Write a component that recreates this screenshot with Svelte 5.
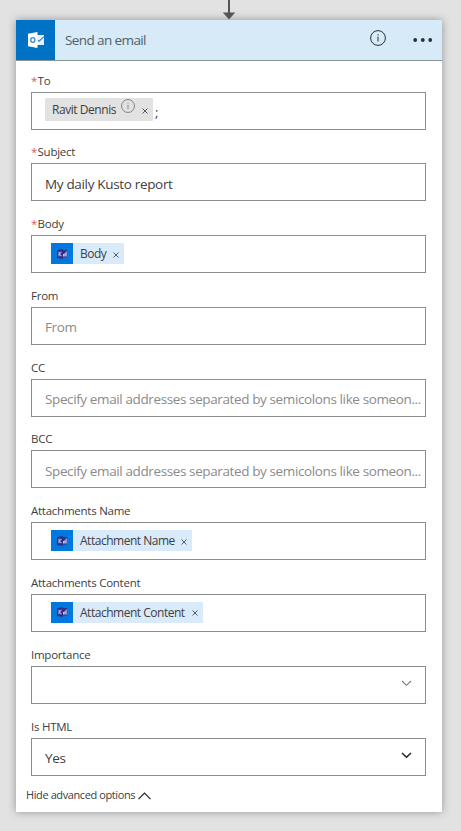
<script>
  const hint = 'Specify email addresses separated by semicolons like someon...';
  const fields = [
    { label: 'To', required: true, kind: 'person', value: 'Ravit Dennis' },
    { label: 'Subject', required: true, kind: 'text', value: 'My daily Kusto report' },
    { label: 'Body', required: true, kind: 'tokens', value: 'Body', width: 73 },
    { label: 'From', kind: 'placeholder', value: 'From' },
    { label: 'CC', kind: 'placeholder', value: hint },
    { label: 'BCC', kind: 'placeholder', value: hint },
    { label: 'Attachments Name', kind: 'tokens', value: 'Attachment Name', width: 141 },
    { label: 'Attachments Content', kind: 'tokens', value: 'Attachment Content', width: 152 },
    { label: 'Importance', kind: 'select', value: '' },
    { label: 'Is HTML', kind: 'select', value: 'Yes' }
  ];
</script>

{#snippet info(size)}
  <svg class="info" width={size} height={size} viewBox="0 0 16 16" fill="none" stroke="currentColor">
    <circle cx="8" cy="8" r="7.4" />
    <path d="M8 6.7v4.8M8 4.3v1.2" />
  </svg>
{/snippet}

{#snippet cross()}
  <svg class="cross" width="6" height="6" viewBox="0 0 6 6" stroke="#555c61" stroke-width="1"><path d="M.5.5l5 5M5.5.5l-5 5" /></svg>
{/snippet}

<main>
  <svg class="arrow" width="14" height="20" viewBox="0 0 14 20" fill="#555"><path d="M6 0h2v12.5h5.2L7 19.5.8 12.5H6z" /></svg>
  <section class="card">
    <header>
      <div class="logo">
        <svg width="18" height="18" viewBox="0 0 18 18">
          <path fill="#e4f2fc" d="M9 4h8v10H9z" />
          <path fill="none" stroke="#2f86cf" stroke-width="1.1" d="M10.5 9l1.6 1.2L17 5.6" />
          <path fill="#fff" d="M1 2.8L10.5 1v16L1 15.2z" />
          <ellipse cx="5.8" cy="9" rx="2" ry="2.4" fill="none" stroke="#3a91d5" stroke-width="1.4" />
        </svg>
      </div>
      <h1>Send an email</h1>
      <span class="head-info">{@render info(16)}</span>
      <svg class="dots" width="20" height="4" viewBox="0 0 20 4" fill="#25313a"><circle cx="2.2" cy="2" r="1.9" /><circle cx="9.8" cy="2" r="1.9" /><circle cx="17.2" cy="2" r="1.9" /></svg>
    </header>
    <div class="fields">
      {#each fields as f}
        <div class="field">
          <div class="label">{#if f.required}<span class="star">*</span>{/if}{f.label}</div>
          <div class="box {f.kind}">
            {#if f.kind === 'person'}
              <span class="person-chip"><span class="chip-text">{f.value}</span><span class="person-info">{@render info(14)}</span>{@render cross()}</span>
              <span class="semi">;</span>
            {:else if f.kind === 'tokens'}
              <span class="token" style="width: {f.width}px">
                <span class="token-icon">
                  <svg width="12" height="12" viewBox="0 0 12 12">
                    <path fill="#2d3088" d="M1 2l6-1v10l-6-1zM7 2h4v7.5H7z" />
                    <path fill="none" stroke="#b9b2e2" stroke-width="1.1" d="M3 3.7v4.6M5.4 3.8L3.4 6l2 2.2" />
                    <path fill="#c9c3ec" d="M7 6h1.3v2.5H7zM8.5 5h1v3.5h-1zM9.7 3.6h1v4.9h-1z" />
                  </svg>
                </span>
                <span class="token-text">{f.value}</span>{@render cross()}
              </span>
            {:else}
              <span class="value">{f.value}</span>
              {#if f.kind === 'select'}
                <svg class="chevron" class:muted={!f.value} width="11" height="7" viewBox="0 0 11 7" fill="none"><path d="M1 1l4.5 4.3L10 1" /></svg>
              {/if}
            {/if}
          </div>
        </div>
      {/each}
    </div>
    <footer>
      <span>Hide advanced options</span>
      <svg width="13" height="8" viewBox="0 0 13 8" fill="none" stroke="#222" stroke-width="1.2"><path d="M.5 7.2l6-6 6 6" /></svg>
    </footer>
  </section>
</main>

<style>
  :global(body) { background: #e2e2e2; }
  main {
    box-sizing: border-box;
    width: 461px;
    height: 831px;
    overflow: hidden;
    background: #e2e2e2;
    font-family: 'Open Sans', 'Noto Sans', sans-serif;
    color: #404040;
    white-space: nowrap;
  }
  svg { display: block; flex: none; }
  .arrow { margin-left: 222px; }
  .card {
    box-sizing: border-box;
    width: 426px;
    height: 792px;
    margin-left: 16px;
    background: #fff;
    box-shadow: 0 0 8px rgba(0, 0, 0, 0.35);
  }
  header {
    display: flex;
    align-items: center;
    box-sizing: border-box;
    height: 41px;
    background: #d7eaf7;
    border-bottom: 1px solid #84929c;
  }
  .logo {
    display: flex;
    align-items: center;
    justify-content: center;
    width: 39px;
    height: 40px;
    background: #0072c6;
  }
  h1 {
    flex: 1;
    margin: 0 0 0 10px;
    font-size: 13.5px;
    font-weight: 400;
    letter-spacing: -0.6px;
    color: #52616b;
  }
  .head-info { margin: -4px 27px 0 0; color: #25313a; }
  .dots { margin-right: 9px; }
  .fields { padding: 9.5px 16px 0 15px; }
  .field { height: 71.785px; }
  .label {
    height: 21px;
    font-size: 11.5px;
    line-height: 20px;
    letter-spacing: -0.25px;
  }
  .star { color: #dd5a5e; margin-right: 1px; letter-spacing: -0.8px; }
  .box {
    display: flex;
    align-items: center;
    box-sizing: border-box;
    height: 38px;
    padding: 0 4px 0 13px;
    border: 1px solid #8c8c8c;
    font-size: 13.5px;
    letter-spacing: -0.33px;
  }
  .value { flex: 1; padding-top: 3px; }
  .placeholder { color: #8b8b8b; letter-spacing: -0.385px; }
  .person-chip {
    display: flex;
    align-items: center;
    box-sizing: border-box;
    width: 108px;
    height: 23px;
    margin-top: -2px;
    padding: 0 5px 0 7px;
    background: #e2e2e2;
    font-size: 12px;
    letter-spacing: -0.45px;
    border-radius: 1px;
  }
  .chip-text { margin-top: -1px; }
  .person-info { margin: -8px 7px 0 auto; color: #777; }
  .person-chip .cross { margin-top: 3px; }
  .semi { margin: 3px 0 0 2px; font-size: 13px; }
  .token {
    display: flex;
    align-items: center;
    height: 21px;
    margin: -1px 0 0 6px;
    background: #d9eafa;
    font-size: 12px;
    letter-spacing: -0.48px;
  }
  .token-icon {
    display: flex;
    align-items: center;
    justify-content: center;
    width: 22px;
    height: 21px;
    margin-right: 7px;
    background: #0078e0;
  }
  .token .cross { margin: 2px 5px 0 auto; }
  .chevron { margin: -3px 9px 0 0; stroke: #222; stroke-width: 1.5; }
  .chevron.muted { stroke: #777; stroke-width: 1.1; }
  footer {
    display: flex;
    align-items: center;
    gap: 3px;
    padding-left: 10px;
    height: 16px;
    margin-top: -2px;
    font-size: 11px;
    letter-spacing: -0.4px;
  }
  footer svg { margin-top: 3px; }
</style>
